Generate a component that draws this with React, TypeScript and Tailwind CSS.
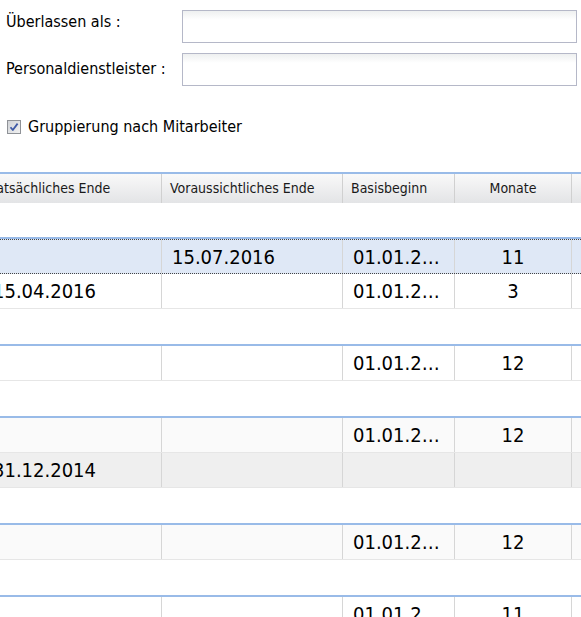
const font = "font-['DejaVu_Sans_Condensed','DejaVu_Sans',sans-serif] font-stretch-condensed"

type Row =
  | { kind: 'group'; first?: boolean }
  | { kind: 'data'; bg: string; selected?: boolean; cells: [string, string, string, string, string] }

const rows: Row[] = [
  { kind: 'group', first: true },
  { kind: 'data', bg: 'bg-[#dfe8f6]', selected: true, cells: ['', '15.07.2016', '01.01.2015', '11', ''] },
  { kind: 'data', bg: 'bg-white', cells: ['15.04.2016', '', '01.01.2015', '3', ''] },
  { kind: 'group' },
  { kind: 'data', bg: 'bg-white', cells: ['', '', '01.01.2015', '12', ''] },
  { kind: 'group' },
  { kind: 'data', bg: 'bg-[#fafafa]', cells: ['', '', '01.01.2015', '12', ''] },
  { kind: 'data', bg: 'bg-[#efefef]', cells: ['31.12.2014', '', '', '', ''] },
  { kind: 'group' },
  { kind: 'data', bg: 'bg-[#fafafa]', cells: ['', '', '01.01.2015', '12', ''] },
  { kind: 'group' },
  { kind: 'data', bg: 'bg-white', cells: ['', '', '01.01.2015', '11', ''] },
]

const cols = 'grid grid-cols-[179px_181px_112px_117px_120px]'
const headers = ['Tatsächliches Ende', 'Voraussichtliches Ende', 'Basisbeginn', 'Monate', '']

function TextField() {
  return (
    <div className="h-[33px] w-[395px] border border-[#b5b8c8] bg-[linear-gradient(to_bottom,#eef0f0,#ffffff_9px)]" />
  )
}

function CheckBox() {
  return (
    <svg width="14" height="14" viewBox="0 0 14 14" className="shrink-0">
      <defs>
        <linearGradient id="cb" x1="0" y1="0" x2="1" y2="1">
          <stop offset="0" stopColor="#cfd2d6" />
          <stop offset="1" stopColor="#f2f2f2" />
        </linearGradient>
      </defs>
      <rect x="0.5" y="0.5" width="13" height="13" fill="url(#cb)" stroke="#8f9297" />
      <path d="M3.5 7.2 L5.8 10 L10.6 3.6" fill="none" stroke="#3f5aa6" strokeWidth="1.8" strokeLinejoin="round" />
    </svg>
  )
}

export default function App() {
  return (
    <div className={`w-[581px] h-[617px] overflow-hidden bg-white text-black ${font}`}>
      <div className="pl-[6px] pt-[10px]">
        <div className="flex">
          <div className="w-[176px] pt-[2px] text-[16px] leading-[20px]">Überlassen als :</div>
          <TextField />
        </div>
        <div className="flex mt-[10px]">
          <div className="w-[176px] pt-[6px] text-[16px] leading-[20px]">Personaldienstleister :</div>
          <TextField />
        </div>
        <div className="flex items-center gap-[7px] mt-[31px] pl-[1px] text-[16px] leading-[20px]">
          <CheckBox />
          <span>Gruppierung nach Mitarbeiter</span>
        </div>
      </div>

      <div className="mt-[35px] overflow-hidden">
        <div className="-ml-[17px] w-[720px]">
          <div className={`${cols} h-[31px] border-t-2 border-[#99bbe8] bg-gradient-to-b from-[#f9f9f9] to-[#e3e4e6]`}>
            {headers.map((h, i) => (
              <div
                key={i}
                className={`flex items-center border-r border-[#d0d0d0] px-[8px] text-[14px] text-[#1a1a1a] whitespace-nowrap overflow-hidden ${
                  i === 3 ? 'justify-center' : ''
                }`}
              >
                {h}
              </div>
            ))}
          </div>

          {rows.map((r, i) =>
            r.kind === 'group' ? (
              <div
                key={i}
                className={`${r.first ? 'h-[36px]' : 'h-[37px]'} bg-white border-b-2 border-[#99bbe8]`}
              />
            ) : (
              <div
                key={i}
                className={`${cols} h-[35px] ${r.bg} ${
                  r.selected
                    ? 'border-y border-dotted border-[#444]'
                    : 'border-b border-[#e6e6e6]'
                }`}
              >
                {r.cells.map((c, j) => (
                  <div
                    key={j}
                    className={`flex items-center border-r border-[#d6d6d6] px-[10px] text-[20px] min-w-0 ${
                      j === 3 ? 'justify-center' : ''
                    }`}
                  >
                    <span className="truncate">{c}</span>
                  </div>
                ))}
              </div>
            )
          )}
        </div>
      </div>
    </div>
  )
}
